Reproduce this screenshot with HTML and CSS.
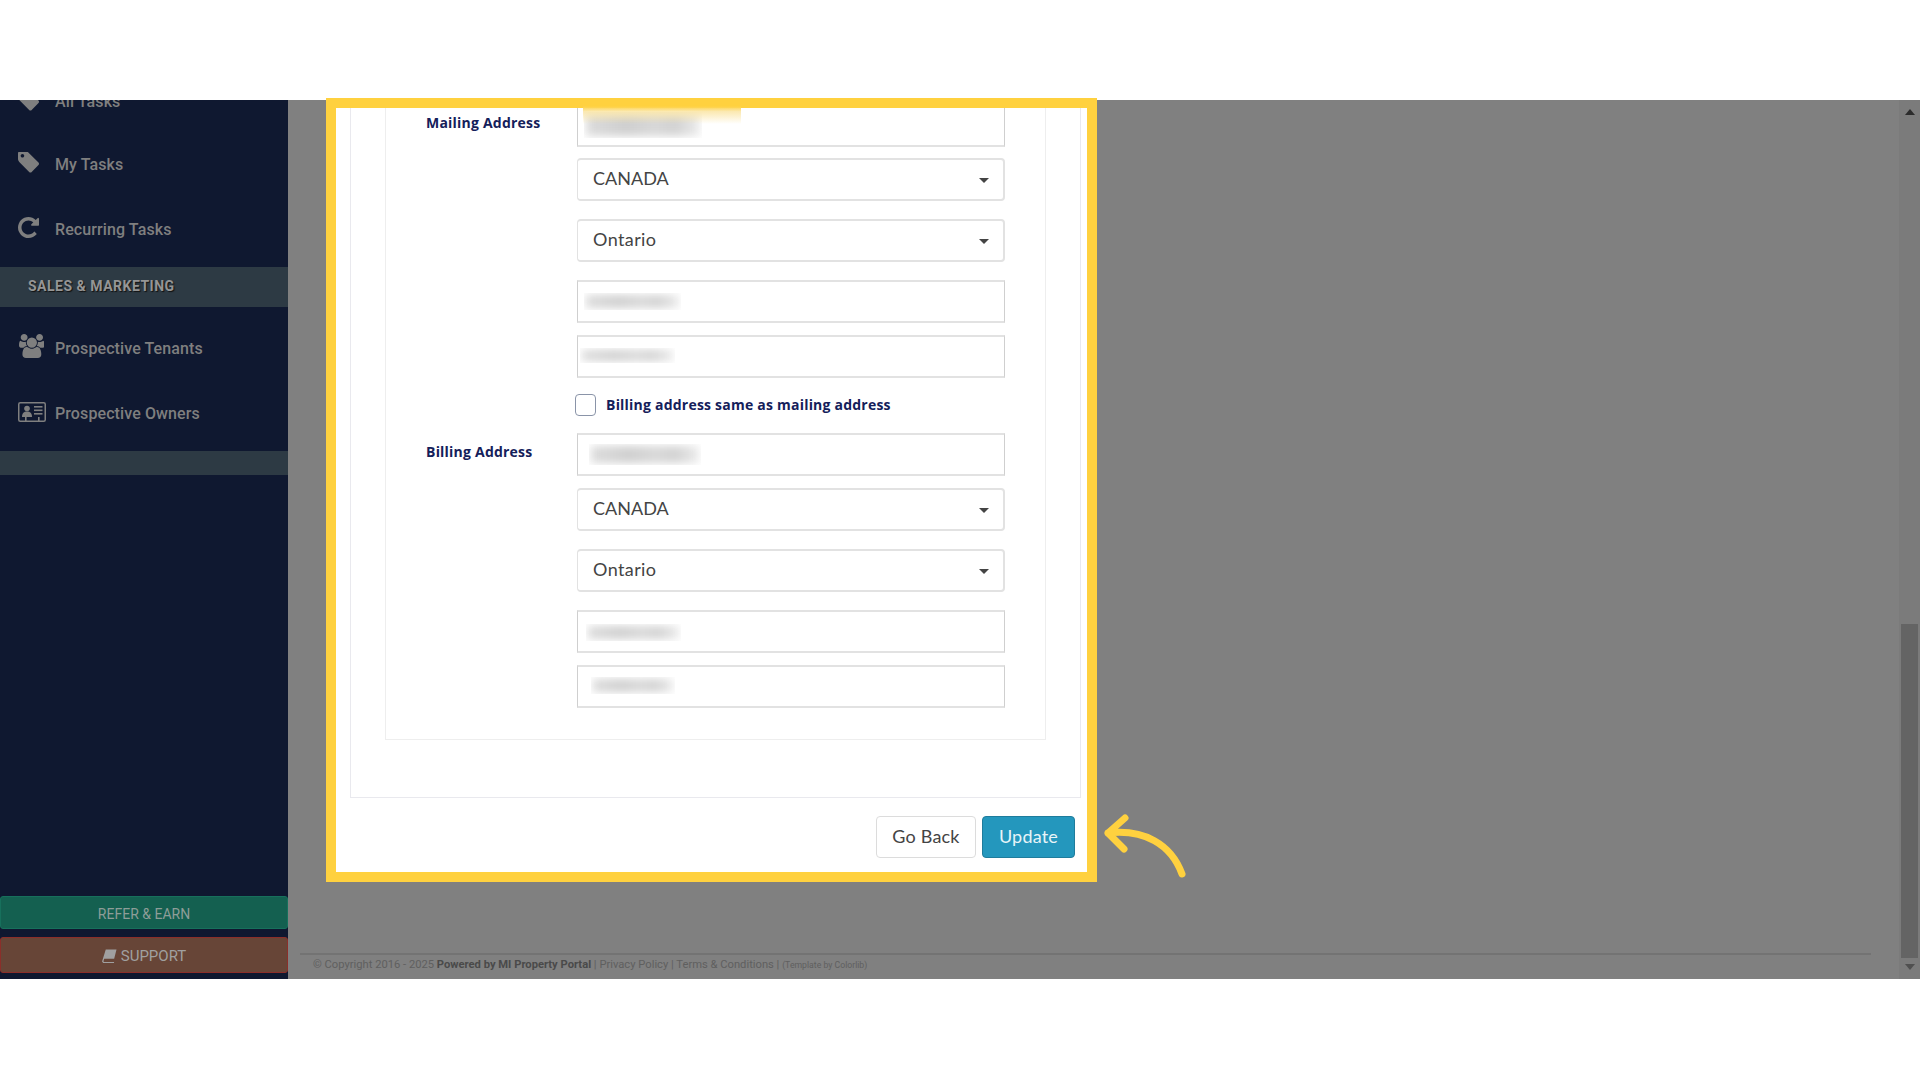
FILE: index.html
```html
<!DOCTYPE html>
<html lang="en">

<head>
  <meta charset="UTF-8">
  <title>Edit Property</title>
  <link rel="stylesheet" href="styles.css">
</head>

<body>
  <div class="app">
    <aside class="sidebar">
      <nav class="menu">
        <a class="menu-item menu-item-cut">
          <svg class="menu-icon" viewBox="128 192 1515 1472"><path d="M576 448q0-53-37.500-90.500t-90.500-37.500-90.500 37.500-37.500 90.500 37.500 90.500 90.500 37.500 90.500-37.500 37.500-90.500zm1067 576q0 53-37 90l-491 492q-39 37-91 37-53 0-90-37l-715-716q-38-37-64.500-101t-26.500-117v-416q0-52 38-90t90-38h416q53 0 117 26.500t102 64.500l715 714q37 39 37 91z" fill="currentColor"/></svg>
          All Tasks
        </a>
        <a class="menu-item">
          <svg class="menu-icon" viewBox="128 192 1515 1472"><path d="M576 448q0-53-37.500-90.500t-90.500-37.500-90.500 37.500-37.500 90.500 37.500 90.500 90.500 37.500 90.500-37.500 37.500-90.500zm1067 576q0 53-37 90l-491 492q-39 37-91 37-53 0-90-37l-715-716q-38-37-64.500-101t-26.500-117v-416q0-52 38-90t90-38h416q53 0 117 26.500t102 64.500l715 714q37 39 37 91z" fill="currentColor"/></svg>
          My Tasks
        </a>
        <a class="menu-item">
          <svg class="menu-icon" viewBox="128 128 1536 1536"><path d="M1664 256v448q0 26-19 45t-45 19h-448q-42 0-59-40-17-39 14-69l138-138q-148-137-349-137-104 0-198.500 40.500t-163.500 109.500-109.500 163.500-40.500 198.500 40.500 198.500 109.500 163.500 163.500 109.500 198.500 40.500q119 0 225-52t179-147q7-10 23-12 15 0 25 9l137 138q9 8 9.500 20.500t-7.500 22.500q-109 132-264 204.500t-327 72.500q-156 0-298-61t-245-164-164-245-61-298 61-298 164-245 245-164 298-61q147 0 284.500 55.500t244.500 156.500l130-129q29-31 70-14 39 17 39 59z" fill="currentColor"/></svg>
          Recurring Tasks
        </a>
        <div class="menu-section">SALES &amp; MARKETING</div>
        <a class="menu-item">
          <svg class="menu-icon menu-icon-group" viewBox="0 0 1920 1792"><path d="M657 896q-162 5-265 128h-134q-82 0-138-40.500t-56-118.500q0-353 124-353 6 0 43.500 21t97.500 42.500 119 21.500q67 0 133-23-5 37-5 66 0 139 81 256zm1071 637q0 120-73 189.500t-194 69.500h-874q-121 0-194-69.500t-73-189.500q0-53 3.500-103.500t14-109 26.500-108.500 43-97.500 62-81 85.500-53.500 111.500-20q10 0 43 21.500t73 48 107 48 135 21.500 135-21.500 107-48 73-48 43-21.500q61 0 111.500 20t85.500 53.500 62 81 43 97.500 26.500 108.500 14 109 3.500 103.500zm-1024-1277q0 106-75 181t-181 75-181-75-75-181 75-181 181-75 181 75 75 181zm704 384q0 159-112.500 271.500t-271.500 112.500-271.500-112.500-112.500-271.500 112.500-271.500 271.500-112.500 271.500 112.500 112.500 271.500zm576 225q0 78-56 118.500t-138 40.500h-134q-103-123-265-128 81-117 81-256 0-29-5-66 66 23 133 23 59 0 119-21.500t97.500-42.500 43.500-21q124 0 124 353zm-128-609q0 106-75 181t-181 75-181-75-75-181 75-181 181-75 181 75 75 181z" fill="currentColor"/></svg>
          Prospective Tenants
        </a>
        <a class="menu-item">
          <svg class="menu-icon menu-icon-card" viewBox="0 0 28 20"><rect x=".75" y=".75" width="26.500" height="18.500" rx="1.500" fill="none" stroke="currentColor" stroke-width="1.500"/><g fill="currentColor"><circle cx="9" cy="6.500" r="2.800"/><path d="M4 15c0-4 2-5.500 5-5.500s5 1.500 5 5.500z"/><rect x="16" y="4" width="8.500" height="1.600"/><rect x="16" y="7.500" width="8.500" height="1.600"/><rect x="16" y="11" width="8.500" height="1.600"/><rect x="7" y="15" width="1.600" height="4"/><rect x="20" y="15" width="1.600" height="4"/></g></svg>
          Prospective Owners
        </a>
        <div class="menu-band"></div>
      </nav>
      <div class="side-buttons">
        <a class="side-btn side-btn-refer">REFER &amp; EARN</a>
        <a class="side-btn side-btn-support">
          <svg class="book-icon" viewBox="0 0 16 15"><path d="M4 .5h11.500l-2.500 10H2.300L1.500 13l.5 1H13l-.3 1H1.200L0 13.500z" fill="currentColor"/></svg>
          SUPPORT
        </a>
      </div>
    </aside>

    <main class="content">
      <section class="modal">
        <div class="outer-panel">
          <div class="inner-panel">
            <div class="address-row">
              <label class="field-label">Mailing Address</label>
              <div class="fields">
                <div class="input input-first"><span class="smudge smudge-a"></span></div>
                <div class="select">CANADA<i class="caret"></i></div>
                <div class="select select-wide">Ontario<i class="caret"></i></div>
                <div class="input input-gap"><span class="smudge smudge-b"></span></div>
                <div class="input"><span class="smudge smudge-c"></span></div>
              </div>
            </div>
            <div class="same-row">
              <span class="checkbox"></span>
              <span class="same-text">Billing address same as mailing address</span>
            </div>
            <div class="address-row">
              <label class="field-label">Billing Address</label>
              <div class="fields">
                <div class="input input-gap"><span class="smudge smudge-d"></span></div>
                <div class="select">CANADA<i class="caret"></i></div>
                <div class="select select-wide">Ontario<i class="caret"></i></div>
                <div class="input input-gap"><span class="smudge smudge-e"></span></div>
                <div class="input"><span class="smudge smudge-f"></span></div>
              </div>
            </div>
          </div>
        </div>
        <div class="modal-actions">
          <button class="btn btn-back">Go Back</button>
          <button class="btn btn-update">Update</button>
        </div>
      </section>

      <footer class="footer">
        © Copyright 2016 - 2025 <b>Powered by MI Property Portal</b> | Privacy Policy | Terms &amp; Conditions | <small>(Template by Colorlib)</small>
      </footer>
    </main>

    <div class="scrollbar">
      <i class="arrow arrow-up"></i>
      <div class="thumb"></div>
      <i class="arrow arrow-down"></i>
    </div>
  </div>

  <!-- highlight laid over the screenshot -->
  <div class="highlight"></div>
  <div class="highlight-fade"></div>
  <svg class="pointer" viewBox="0 0 90 70">
    <path d="M6 19C42 15 69 30 80 60M23 4L6 19L22 35" fill="none" stroke="#ffd13f" stroke-width="7" stroke-linecap="round" stroke-linejoin="round"/>
  </svg>
</body>

</html>
```

FILE: styles.css
```css
body {
  margin: 0;
  background-color: #ffffff;
  font-family: 'Lato', sans-serif;
}

.app {
  display: flex;
  height: 879px;
  margin-top: 100px;
  background-color: #808080;
  overflow: hidden;
}

/* sidebar */
.sidebar {
  width: 288px;
  flex-shrink: 0;
  display: flex;
  flex-direction: column;
  justify-content: space-between;
  background-color: #0f1830;
  font-family: 'Roboto', sans-serif;
}

.menu-item {
  display: flex;
  align-items: center;
  height: 65px;
  padding-left: 18px;
  font-size: 16px;
  font-weight: 500;
  letter-spacing: 0.1px;
  color: #7f7f7f;
}

.menu-item-cut {
  height: 33px;
  align-items: flex-end;
  margin-bottom: -1px;
  transform: translateY(-22px);
}

.menu-icon {
  width: 21px;
  height: 21px;
  margin-right: 16px;
  margin-top: -5px;
  flex-shrink: 0;
}

.menu-icon-group {
  width: 26px;
  height: 24px;
  margin-right: 11px;
  margin-top: -6px;
}

.menu-icon-card {
  width: 28px;
  height: 20px;
  margin-right: 9px;
  margin-top: -4px;
}

.menu-section {
  height: 40px;
  line-height: 39px;
  margin: 5px 0 9px;
  padding-left: 28px;
  background-color: #2d3a44;
  color: #959595;
  font-size: 14px;
  font-weight: 700;
  letter-spacing: 0.5px;
  text-shadow: 1px 1px 1px #111111;
}

.menu-band {
  height: 24px;
  margin-top: 5px;
  background-color: #2d3a44;
}

.side-buttons {
  padding-bottom: 6px;
}

.side-btn {
  display: flex;
  align-items: center;
  justify-content: center;
  gap: 4px;
  box-sizing: border-box;
  font-size: 14px;
  padding-top: 2px;
  border-radius: 3px;
  border: 1px solid;
}

.side-btn-refer {
  height: 33px;
  margin-bottom: 8px;
  background-color: #146050;
  border-color: #17705c;
  color: #8d9d98;
}

.side-btn-support {
  height: 36px;
  background-color: #674537;
  border-color: #8b2f2a;
  color: #a0a0a0;
  font-size: 15px;
}

.book-icon {
  width: 15px;
  height: 14px;
}

/* main area */
.content {
  flex: 1;
  display: flex;
  flex-direction: column;
  justify-content: space-between;
  padding-left: 12px;
}

.modal {
  width: 751px;
  margin-left: 36px;
  height: 772px;
  flex-shrink: 0;
  background-color: #ffffff;
  overflow: hidden;
}

.outer-panel {
  margin: 0 6px 0 14px;
  height: 698px;
  box-sizing: border-box;
  padding: 4px 34px 0 34px;
  border: 1px solid #e9e9ee;
  border-top: 0;
}

.inner-panel {
  height: 636px;
  box-sizing: border-box;
  border: 1px solid #eeeeee;
  border-top: 0;
  padding-left: 40px;
  padding-right: 39px;
}

.address-row {
  display: grid;
  grid-template-columns: 151px 428px;
}

.field-label {
  padding-top: 10px;
  font-family: 'Open Sans', sans-serif;
  font-size: 14px;
  font-weight: 700;
  letter-spacing: 0.22px;
  line-height: 18px;
  color: #14205a;
}

.fields {
  display: flex;
  flex-direction: column;
}

.input,
.select {
  height: 43px;
  box-sizing: border-box;
  border: 1px solid #cfcfcf;
  border-top: 2px solid #e2e2e2;
  border-bottom: 2px solid #e2e2e2;
  background-color: #ffffff;
}

.input {
  position: relative;
}

.input-first {
  margin-bottom: 11px;
}

.input-gap {
  margin-bottom: 12px;
}

.select {
  position: relative;
  margin-bottom: 18px;
  padding-left: 15px;
  line-height: 36px;
  border-radius: 4px;
  border-color: #e2e2e2;
  border-right-width: 2px;
  font-size: 18px;
  color: #444444;
}

.select-wide {
  letter-spacing: 0.4px;
}

.caret {
  position: absolute;
  right: 14px;
  top: 18px;
  border-style: solid;
  border-width: 5px 5px 0;
  border-color: #444444 transparent transparent;
}

/* blurred out values */
.smudge {
  position: absolute;
  overflow: hidden;
}

.smudge::before {
  content: "";
  position: absolute;
  top: 2px;
  bottom: 2px;
  left: 2px;
  right: 2px;
  background: linear-gradient(90deg, #dcdcdc, #cfcfcf 35%, #d8d8d8 60%, #d2d2d2 78%, #ececec);
  filter: blur(4px);
}

.smudge-a { left: 6px; top: 6px; width: 118px; height: 26px; }
.smudge-b { left: 6px; top: 11px; width: 97px; height: 17px; }
.smudge-c { left: 2px; top: 11px; width: 95px; height: 15px; }
.smudge-d { left: 11px; top: 9px; width: 112px; height: 21px; }
.smudge-e { left: 8px; top: 12px; width: 95px; height: 17px; }
.smudge-f { left: 13px; top: 10px; width: 84px; height: 17px; }

.same-row {
  display: flex;
  align-items: center;
  height: 22px;
  margin: 16px 0 17px 149px;
}

.checkbox {
  width: 21px;
  height: 22px;
  box-sizing: border-box;
  border: 1.5px solid #8a94a8;
  border-radius: 4px;
  margin-right: 10px;
}

.same-text {
  margin-top: -2px;
  font-family: 'Open Sans', sans-serif;
  font-size: 14px;
  font-weight: 700;
  letter-spacing: 0.22px;
  color: #14205a;
}

.modal-actions {
  display: flex;
  justify-content: flex-end;
  gap: 6px;
  margin-top: 18px;
  padding-right: 12px;
}

.btn {
  height: 42px;
  box-sizing: border-box;
  padding-bottom: 3px;
  border-radius: 4px;
  font-family: 'Lato', sans-serif;
  font-size: 18px;
  letter-spacing: 0.2px;
}

.btn-back {
  width: 100px;
  background-color: #ffffff;
  border: 1px solid #dcdcdc;
  color: #444444;
}

.btn-update {
  width: 93px;
  background-color: #2497bd;
  border: 1px solid #1f7c9c;
  color: #e8f4f8;
}

.footer {
  margin-right: 28px;
  height: 24px;
  padding-left: 13px;
  border-top: 2px solid #737373;
  font-family: 'Roboto', sans-serif;
  font-size: 11.2px;
  line-height: 20px;
  color: #5f5f5f;
  white-space: nowrap;
}

.footer b {
  color: #4a4a4a;
}

.footer small {
  font-size: 8.7px;
}

/* scrollbar */
.scrollbar {
  position: relative;
  width: 21px;
  flex-shrink: 0;
  background-color: #7b7b7b;
}

.thumb {
  position: absolute;
  left: 2px;
  right: 2px;
  top: 524px;
  height: 334px;
  background-color: #646464;
}

.arrow {
  position: absolute;
  left: 6px;
  border-style: solid;
  border-color: transparent;
}

.arrow-up {
  top: 9px;
  border-width: 0 5px 6px;
  border-bottom-color: #2b2b2b;
}

.arrow-down {
  top: 864px;
  border-width: 6px 5px 0;
  border-top-color: #505050;
}

/* overlays */
.highlight {
  position: absolute;
  left: 326px;
  top: 98px;
  width: 771px;
  height: 784px;
  box-sizing: border-box;
  border: 10px solid #ffd13f;
}

.highlight-fade {
  position: absolute;
  left: 583px;
  top: 106px;
  width: 158px;
  height: 18px;
  background: linear-gradient(180deg, #ffd13f, rgba(250, 225, 150, 0.75) 30%, rgba(255, 255, 255, 0));
}

.pointer {
  position: absolute;
  left: 1102px;
  top: 814px;
  width: 90px;
  height: 70px;
}
```
